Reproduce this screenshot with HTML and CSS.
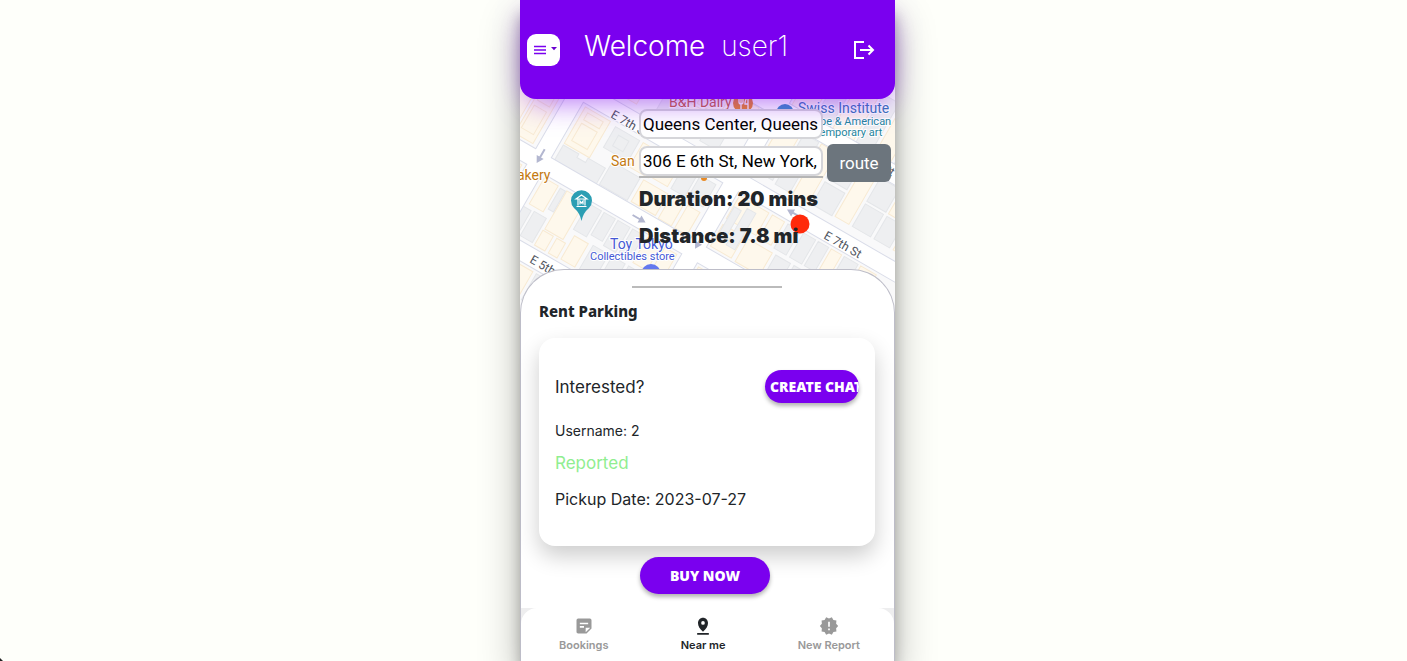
FILE: index.html
```html
<!DOCTYPE html>
<html lang="en">
<head>
<meta charset="utf-8">
<meta name="viewport" content="width=device-width, initial-scale=1">
<title>Near me</title>
<link rel="stylesheet" href="styles.css">
</head>
<body>
<div class="phone">
  <header class="topbar">
    <button class="menu-button" type="button" aria-label="Menu">
      <svg width="14" height="10" viewBox="0 0 14 10" aria-hidden="true"><path d="M1 1.5h12M1 5h12M1 8.5h12" stroke="#7a00ef" stroke-width="1.3"/></svg>
      <svg class="caret" width="6" height="6" viewBox="0 0 6 6" aria-hidden="true"><path d="M0 0h6L3 3.2z" fill="#6a00d0"/></svg>
    </button>
    <h1 class="welcome">Welcome <span class="user">user1</span></h1>
    <button class="logout" type="button" aria-label="Log out">
      <svg width="22" height="20" viewBox="0 0 22 20" fill="none" stroke="#fff" stroke-width="2" aria-hidden="true"><path d="M11 2H2v16h9M7 10h13M15.500 5.500 20 10l-4.500 4.500"/></svg>
    </button>
  </header>

  <main class="content">
    <section class="map-area">
      <svg class="map" viewBox="0 0 375 226" preserveAspectRatio="xMidYMin slice" role="img" aria-label="Street map">
        <rect width="375" height="226" fill="#f9f9fa"/>
        <g transform="translate(0 66) rotate(30)">
          <g class="lots">
            <path class="cream" d="M-70-70h30v58h-30zM-36-70h20v58h-20zM-13-70h21v58h-21zM-10-66h14v14h-14zM-10-46h14v26h-14z"/>
            <path class="cream" d="M35-70h29v42h-29zM40-66h18v8h-18zM40-54h18v20h-18z"/>
            <path class="grey" d="M35-26h18v4h10v-5h20v20h-48zM71-68h28v24h-28zM78-62h12v12h-12zM86-36h32v26h-32z"/>
            <path class="cream" d="M103-68h22v28h-22zM122-36h28v25h-28zM129-68h17v26h-17zM154-36h15v26h-15zM173-36h14v26h-14z"/>
            <path class="grey" d="M150-68h16v26h-16zM169-68h18v26h-18z"/>
            <path class="grey" d="M-40-157h30v58h-30zM-6-157h15v58h-15zM35-156h22v56h-22zM61-156h17v28h-17zM98-126h22v27h-22zM151-124h20v26h-20z"/>
            <path class="cream" d="M61-124h17v26h-17zM82-156h20v26h-20zM106-156h20v26h-20zM124-126h23v27h-23zM130-156h25v27h-25zM159-156h27v27h-27z"/>
            <path class="cream" d="M35 12h16v30h-16zM10-240h35v70h-35zM55-240h32v35h-32zM95-230h22v60h-22zM121-230h18v60h-18zM143-230h18v30h-18zM165-230h18v60h-18z"/>
            <path class="grey" d="M86 12h15v30h-15zM104 12h13v26h-13zM120 12h14v29h-14zM137 12h13v27h-13zM43 46h14v28h-14z"/>
            <path class="cream" d="M-20 12h14v62h-14zM-3 12h12v25h-12zM13 13h14v31h-14zM61 12h21v44h-21zM60 58h12v17h-12zM76 58h10v17h-10zM90 47h16v27h-16zM154 12h16v29h-16zM174 12h14v29h-14z"/>
            <path class="grey" d="M12 48h12v26h-12zM27 47h13v28h-13zM111 46h18v28h-18zM133 46h15v28h-15zM152 46h16v28h-16zM54 13h6v24h-6z"/>
            <path class="cream" d="M213-70h34v26h-34zM251-70h14v27h-14zM213-37h24v25h-24zM242-37h28v26h-28zM319-70h12v28h-12zM353-70h18v28h-18zM371-38h18v26h-18z"/>
            <path class="grey" d="M214-58h8v36h-8zM226-63h10v42h-10zM269-70h14v28h-14zM287-70h14v28h-14zM304-70h12v28h-12zM334-70h16v28h-16zM274-37h17v26h-17zM295-37h16v26h-16zM315-37h15v26h-15zM334-37h15v26h-15zM352-37h15v26h-15z"/>
            <path class="cream" d="M213-156h22v28h-22zM258-156h18v58h-18zM306-156h16v56h-16zM351-156h18v27h-18zM373-128h18v28h-18zM213-240h23v70h-23zM260-240h24v70h-24zM309-230h18v60h-18z"/>
            <path class="grey" d="M214-124h20v24h-20zM238-156h17v28h-17zM238-125h17v27h-17zM279-156h24v27h-24zM280-125h23v26h-23zM326-156h22v27h-22zM326-126h21v26h-21zM351-126h18v26h-18zM239-240h18v70h-18zM287-230h18v60h-18zM331-230h18v60h-18z"/>
            <path class="grey" d="M76 99h18v30h-18zM98 99h18v30h-18zM119 99h17v30h-17zM-10 99h20v30h-20zM38 99h15v30h-15z"/>
            <path class="cream" d="M57 99h15v30h-15zM140 99h17v30h-17zM213 12h40v30h-40zM258 12h30v30h-30zM213 46h40v28h-40z"/>
          </g>
          <g class="streets">
            <path class="casing" d="M-100 0h600M-100-82h600M-100 87h600M-100-166h600M22-260v420M201-260v420"/>
            <path class="road" d="M-100 0h600M-100-82h600M-100 87h600M-100-166h600M22-260v420M201-260v420"/>
          </g>
          <g class="arrows">
            <path d="M20-13h2v10h-2zM17-4h8l-4 7zM200-18h2v10h-2zM197-9h8l-4 7zM200 64h2v10h-2zM197 73h8l-4 7zM130-1h9v2h-9zM138-4l7 4-7 4zM276-83h-9v2h9zM268-86l-7 4 7 4z"/>
          </g>
        </g>
        <g class="street-names">
          <text transform="translate(90 33) rotate(30)">E 7th St</text>
          <text transform="translate(303 154) rotate(30)">E 7th St</text>
          <text transform="translate(9 178) rotate(30)">E 5th St</text>
          <text transform="translate(336 72) rotate(30)">E 7th St</text>
        </g>
        <g class="place food">
          <text x="149" y="23" class="rust">B&amp;H Dairy</text>
          <text x="91" y="82">San</text>
          <text x="-3" y="96">akery</text>
        </g>
        <circle cx="223" cy="19" r="10" fill="#e98a24"/>
        <path d="M219 13v5q0 2 2 2v7M221 13v7M223 13v5q0 2-2 2M228 27V13q-3 2-3 7h3" fill="none" stroke="#fff" stroke-width="1.300"/>
        <circle cx="265" cy="29" r="9" fill="#3b8fc8"/>
        <circle cx="184" cy="94" r="3" fill="#e98a24"/>
        <g class="place teal">
          <text x="278" y="29" class="blue">Swiss Institute</text>
          <text x="300" y="41" class="small">pe &amp; American</text>
          <text x="296" y="52" class="small">temporary art</text>
        </g>
        <g class="place toy">
          <text x="90" y="165">Toy Tokyo</text>
          <text x="70" y="176" class="small">Collectibles store</text>
        </g>
        <circle cx="131" cy="190" r="10" fill="#6478ee"/>
        <path d="M61.500 137Q60 129 54 124A10.500 10.500 0 1 1 69 124Q63 129 61.500 137z" fill="#2b9eb3"/>
        <path d="M56 115l5.500-4 5.500 4zM56.500 122.500h10M58 115.500v6M65 115.500v6M60 120.500v-3.500l1.500 2 1.500-2v3.500" fill="none" stroke="#fff" stroke-width="1.200"/>
        <circle cx="280" cy="140" r="9.500" fill="#ff2a0a"/>
      </svg>
      <form class="route-form">
        <div class="fields">
          <input class="place-input" type="text" aria-label="Origin" value="Queens Center, Queens">
          <div class="destination"><input class="place-input" type="text" aria-label="Destination" value="306 E 6th St, New York,"></div>
          <p class="route-info">Duration: 20 mins</p>
          <p class="route-info">Distance: 7.8 mi</p>
        </div>
        <button class="route-button" type="button">route</button>
      </form>
    </section>

    <section class="sheet">
      <div class="handle"></div>
      <h2 class="sheet-title">Rent Parking</h2>
      <article class="card">
        <div class="card-head">
          <p class="line">Interested?</p>
          <button class="pill chat" type="button">CREATE CHAT</button>
        </div>
        <p class="line username">Username: 2</p>
        <p class="line reported">Reported</p>
        <p class="line">Pickup Date: 2023-07-27</p>
      </article>
      <button class="pill buy" type="button">BUY NOW</button>
    </section>
  </main>

  <div class="nav-wrap">
    <nav class="tabs">
      <a class="tab" href="#bookings">
        <svg width="20" height="20" viewBox="0 0 24 24" aria-hidden="true"><path fill="currentColor" d="M19 3H5a2 2 0 0 0-2 2v14c0 1.100.9 2 2 2h10l6-6V5a2 2 0 0 0-2-2zM7 8h10v2H7zm5 6H7v-2h5zm2 5.500V14h5.500z"/></svg>
        Bookings
      </a>
      <a class="tab active" href="#near" aria-current="page">
        <svg width="20" height="20" viewBox="0 0 24 24" aria-hidden="true"><path fill="currentColor" fill-rule="evenodd" d="M18 8.500C18 4.500 15.300 2 12 2S6 4.500 6 8.500C6 12 8 15.500 12 19c4-3.500 6-7 6-10.500zM12 10.500a2.200 2.200 0 1 1 0-4.400 2.200 2.200 0 0 1 0 4.400zM5 20.500h14v2H5z"/></svg>
        Near me
      </a>
      <a class="tab" href="#report">
        <svg width="20" height="20" viewBox="0 0 24 24" aria-hidden="true"><path fill="currentColor" fill-rule="evenodd" d="M23 12l-2.440-2.780.34-3.680-3.610-.82-1.890-3.180L12 3 8.600 1.540 6.710 4.720l-3.610.81.34 3.680L1 12l2.440 2.780-.34 3.690 3.610.82 1.890 3.180L12 21l3.400 1.460 1.890-3.180 3.610-.82-.34-3.680zM13 17h-2v-2h2zm0-4h-2V7h2z"/></svg>
        New Report
      </a>
    </nav>
  </div>
</div>
</body>
</html>
```
FILE: styles.css
```css
* { box-sizing: border-box; }

body {
  margin: 0;
  padding-left: 8px;
  min-height: 100vh;
  background: #fefffa;
  color: #212529;
  font-family: Inter, "Liberation Sans", sans-serif;
  font-size: 16px;
}

body::after {
  content: "";
  position: fixed;
  left: 0;
  bottom: 0;
  border-left: 3px solid #222;
  border-top: 3px solid transparent;
}

h1, h2, p { margin: 0; }
button { border: 0; font-family: inherit; cursor: pointer; }

.phone {
  display: flex;
  flex-direction: column;
  max-width: 375px;
  min-height: 100vh;
  margin: 0 auto;
  background: #fff;
  box-shadow: 0 19px 38px rgba(0, 0, 0, .3), 0 15px 12px rgba(0, 0, 0, .22);
}

.topbar {
  position: relative;
  z-index: 2;
  display: flex;
  align-items: center;
  padding: 24px 20px 23px 7px;
  min-height: 99px;
  border-radius: 0 0 16px 16px;
  background: #7a00ef;
  box-shadow: 0 10px 30px -8px rgba(122, 0, 239, .6);
}

.menu-button {
  display: flex;
  align-items: center;
  justify-content: center;
  gap: 4px;
  width: 33px;
  height: 32px;
  padding: 0 3px 0 6px;
  border-radius: 9px;
  background: #fff;
}
.menu-button svg { flex: none; }

.welcome {
  margin-left: 24px;
  padding-bottom: 8px;
  color: #fff;
  font-size: 28px;
  font-weight: 300;
  line-height: 36px;
}
.user { margin-left: 8px; font-weight: 200; }

.logout { display: flex; margin-left: auto; padding: 0; background: none; }

.content { display: flex; flex: 1; flex-direction: column; }

.map-area { position: relative; padding: 10px 4px 14px 119px; }

.map {
  position: absolute;
  top: -15px;
  left: 0;
  width: 100%;
  height: 226px;
}
.cream { fill: #fef8ec; stroke: #f8ead2; }
.grey { fill: #eeeff1; stroke: #e4e6e9; }
.casing, .road { fill: none; }
.casing { stroke: #dadde9; stroke-width: 19; }
.road { stroke: #fff; stroke-width: 17; }
.arrows { fill: #b3b7d0; }
.map text { font-family: Roboto, sans-serif; paint-order: stroke; stroke: #fff; stroke-width: 2; }
.street-names text { font-size: 12px; fill: #505560; }
.place text { font-size: 14px; }
.place .small { font-size: 11px; }
.food text { fill: #c47a12; }
.food .rust { fill: #c5643e; }
.teal text { fill: #25869d; }
.teal .blue { fill: #3977b8; }
.toy text { fill: #4459d5; }

.route-form {
  position: relative;
  display: flex;
  align-items: flex-start;
  justify-content: space-between;
  gap: 4px;
}
.fields { flex: 1; min-width: 0; }
.place-input {
  display: block;
  width: 100%;
  height: 30px;
  padding: 0 2px;
  border: 2px solid #d5d5d9;
  border-radius: 8px;
  background: #fff;
  color: #000;
  font-family: Roboto, sans-serif;
  font-size: 17px;
}
.destination { margin: 7px 0 3px; border-bottom: 2px solid #b5b5b5; }
.route-info { font-size: 20px; font-weight: 900; line-height: 37px; white-space: nowrap; }
.route-button {
  width: 64px;
  height: 38px;
  margin-top: 35px;
  padding: 0;
  border-radius: 6px;
  background: #6c757d;
  color: #fff;
  font-family: Roboto, sans-serif;
  font-size: 17px;
}

.sheet {
  position: relative;
  display: flex;
  flex: 1;
  flex-direction: column;
  padding: 16px 19px 14px 18px;
  border: 1px solid #bdbdc8;
  border-bottom: 0;
  border-radius: 44px 44px 0 0;
  background: #fff;
}
.handle { align-self: center; width: 150px; height: 2px; background: #bbb; }
.sheet-title { margin: 12px 0 16px; font-family: "Noto Sans", sans-serif; font-size: 15px; font-weight: 800; line-height: 22px; }

.card {
  padding: 32px 16px 35px;
  border-radius: 16px;
  background: #fff;
  box-shadow: 0 10px 22px rgba(0, 0, 0, .2);
}
.card-head { display: flex; justify-content: space-between; margin-bottom: 16px; }
.line { line-height: 24px; margin-bottom: 12px; }
.card-head .line { margin: 5px 0 0; font-size: 17px; }
.card .username { margin-bottom: 8px; font-size: 14px; }
.card .reported { color: #90ee90; font-size: 17px; }
.card .line:last-child { margin-bottom: 0; }

.pill {
  border-radius: 20px;
  background: #7a00ef;
  color: #fff;
  font-family: "Noto Sans", sans-serif;
  font-size: 14px;
  font-weight: 900;
  white-space: nowrap;
  box-shadow: 0 3px 4px rgba(0, 0, 0, .3);
}
.chat { width: 94px; height: 33px; padding: 0 5px; overflow: hidden; text-align: left; }
.buy { align-self: center; width: 130px; height: 37px; margin: 11px 4px 0 0; }

.nav-wrap { border: 1px solid #bdbdc8; border-width: 0 1px; background: #eeeeef; }
.tabs {
  display: flex;
  justify-content: space-between;
  padding: 8px 34px 8px 38px;
  border-radius: 16px 16px 0 0;
  background: #fff;
}
.tab {
  display: flex;
  flex-direction: column;
  align-items: center;
  gap: 1px;
  color: #999;
  font-size: 11px;
  font-weight: 600;
  line-height: 16px;
  text-decoration: none;
}
.tab.active { color: #212529; }
```
